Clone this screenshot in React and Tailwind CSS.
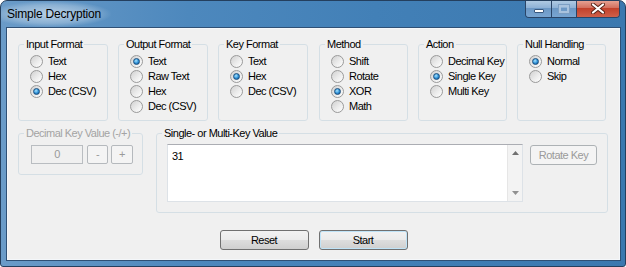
import React from "react";

function Radio({ label, checked }) {
  return (
    <div className="flex items-center h-[15px] gap-[5px]">
      <span className="w-[13px] h-[13px] shrink-0 rounded-full border border-[#9a9a9a] bg-[linear-gradient(135deg,#d0d0d0,#ececec_55%,#ffffff)] flex items-center justify-center">
        {checked && (
          <span className="w-[7px] h-[7px] rounded-full border border-[#1b4f7e] bg-[radial-gradient(circle_at_40%_35%,#a8e4ff,#2c8fd6_55%,#0e4a86)]" />
        )}
      </span>
      <span className="whitespace-nowrap">{label}</span>
    </div>
  );
}

function Group({ title, className, disabled, children }) {
  return (
    <fieldset className={"border border-[#d5dfe5] rounded-[3px] " + className}>
      <legend
        className={
          "ml-[5px] px-[2px] leading-[13px] whitespace-nowrap " +
          (disabled ? "text-[#a3a3a3]" : "text-black")
        }
      >
        {title}
      </legend>
      {children}
    </fieldset>
  );
}

function Options({ items, selected }) {
  return (
    <div className="flex flex-col pl-[11px] pt-[3px]">
      {items.map((it) => (
        <Radio key={it} label={it} checked={it === selected} />
      ))}
    </div>
  );
}

function WinButton({ children, className }) {
  return (
    <div
      className={
        "h-[20px] w-[89px] flex items-center justify-center rounded-[3px] border border-[#707070] bg-[linear-gradient(#f2f2f2,#ebebeb_48%,#dddddd_52%,#cfcfcf)] text-black " +
        className
      }
    >
      {children}
    </div>
  );
}

export default function App() {
  return (
    <div className="w-[626px] h-[267px] flex flex-col rounded-t-[7px] rounded-b-[3px] border border-[#243f5e] bg-[linear-gradient(to_right,#6a9bc8,#4d88bd_30%,#4280b7_60%,#3b78af)] overflow-hidden font-['Liberation_Sans',Arial,sans-serif] text-[11px] tracking-[-0.5px]">
      {/* title bar */}
      <div className="h-[26px] flex items-center justify-between shrink-0">
        <div className="relative flex items-center h-full pl-[6px]">
          <span className="absolute left-[-10px] top-[0px] w-[120px] h-[26px] rounded-full bg-[radial-gradient(ellipse_at_center,rgba(255,255,255,0.55),rgba(255,255,255,0.25)_50%,rgba(255,255,255,0)_72%)]" />
          <span className="relative text-[12px] tracking-[-0.2px] text-black">Simple Decryption</span>
        </div>
        <div className="self-start -mt-[1px] mr-[5px] flex h-[18px] border border-[#2a4567] border-t-0 rounded-b-[4px] overflow-hidden">
          <div className="w-[26px] h-full flex items-end justify-center pb-[4px] border-r border-[#2a4567] bg-[linear-gradient(#b4cde4,#8fb2d6_45%,#6c98c5_50%,#79a6d2)]">
            <span className="w-[10px] h-[4px] bg-white border border-[#3a5a80] rounded-[1px]" />
          </div>
          <div className="w-[25px] h-full flex items-center justify-center border-r border-[#2a4567] bg-[linear-gradient(#b4cde4,#8fb2d6_45%,#6c98c5_50%,#79a6d2)]">
            <span className="w-[10px] h-[8px] border-2 border-[#a9c3de] shadow-[0_0_0_1px_#7c9fc4]" />
          </div>
          <div className="w-[42px] h-full flex items-center justify-center bg-[linear-gradient(#e8a899,#d3705f_45%,#c2412b_50%,#d0604a)]">
            <svg width="14" height="11" viewBox="0 0 14 11">
              <path d="M2 1.5 L12 9.5 M12 1.5 L2 9.5" stroke="#5a2418" strokeWidth="4" strokeLinecap="round" />
              <path d="M2 1.5 L12 9.5 M12 1.5 L2 9.5" stroke="#ffffff" strokeWidth="2.2" strokeLinecap="round" />
            </svg>
          </div>
        </div>
      </div>

      {/* client area */}
      <div className="flex-1 ml-[5px] mr-[4px] mb-[5px] border border-[#2f5075] flex">
        <div className="flex-1 border border-[#f4f7fa] bg-[#f0f0f0] flex flex-col pl-[10px] pt-[9px]">
          <div className="flex gap-[10px]">
            <Group title="Input Format" className="w-[90px] h-[83px]">
              <Options items={["Text", "Hex", "Dec (CSV)"]} selected="Dec (CSV)" />
            </Group>
            <Group title="Output Format" className="w-[90px] h-[83px]">
              <Options items={["Text", "Raw Text", "Hex", "Dec (CSV)"]} selected="Text" />
            </Group>
            <Group title="Key Format" className="w-[90px] h-[83px]">
              <Options items={["Text", "Hex", "Dec (CSV)"]} selected="Hex" />
            </Group>
            <Group title="Method" className="w-[89px] h-[83px] ml-[1px]">
              <Options items={["Shift", "Rotate", "XOR", "Math"]} selected="XOR" />
            </Group>
            <Group title="Action" className="w-[89px] h-[83px]">
              <Options items={["Decimal Key", "Single Key", "Multi Key"]} selected="Single Key" />
            </Group>
            <Group title="Null Handling" className="w-[89px] h-[83px]">
              <Options items={["Normal", "Skip"]} selected="Normal" />
            </Group>
          </div>

          <div className="flex items-start gap-[13px] mt-[6px]">
            <Group title="Decimal Key Value (-/+)" disabled className="w-[125px] h-[48px]">
              <div className="flex pl-[12px] pt-[5px]">
                <div className="w-[52px] h-[19px] border border-[#b9bdc1] bg-[#f0f0f0] flex items-center justify-center text-[#9a9a9a]">
                  0
                </div>
                <div className="ml-[4px] w-[21px] h-[19px] rounded-[2px] border border-[#b5b9bd] bg-[#f4f4f4] flex items-center justify-center text-[#9a9a9a]">
                  -
                </div>
                <div className="ml-[3px] w-[22px] h-[19px] rounded-[2px] border border-[#b5b9bd] bg-[#f4f4f4] flex items-center justify-center text-[#9a9a9a]">
                  +
                </div>
              </div>
            </Group>
            <Group title="Single- or Multi-Key Value" className="w-[452px] h-[86px]">
              <div className="flex items-start pl-[10px] pt-[4px]">
                <div className="w-[356px] h-[58px] border border-[#dde2e7] border-t-[#abadb3] bg-white flex">
                  <div className="flex-1 pl-[4px] pt-[3px] text-black">31</div>
                  <div className="w-[15px] h-full bg-[#f3f3f3] border-l border-[#e6e6e6] flex flex-col items-center justify-between py-[6px]">
                    <svg width="7" height="4" viewBox="0 0 7 4"><path d="M0 4 L3.5 0 L7 4 Z" fill="#707070" /></svg>
                    <svg width="7" height="4" viewBox="0 0 7 4"><path d="M0 0 L3.5 4 L7 0 Z" fill="#909090" /></svg>
                  </div>
                </div>
                <div className="ml-[7px] mt-[1px] w-[67px] h-[20px] rounded-[3px] border border-[#adb2b5] bg-[#f4f4f4] flex items-center justify-center text-[#9a9a9a]">
                  Rotate Key
                </div>
              </div>
            </Group>
          </div>

          <div className="flex justify-center gap-[10px] mt-[17px] pr-[10px]">
            <WinButton className="">Reset</WinButton>
            <WinButton className="border-[#3c7fb1] shadow-[inset_0_0_0_1px_#bfe3f7]">Start</WinButton>
          </div>
        </div>
      </div>
    </div>
  );
}
